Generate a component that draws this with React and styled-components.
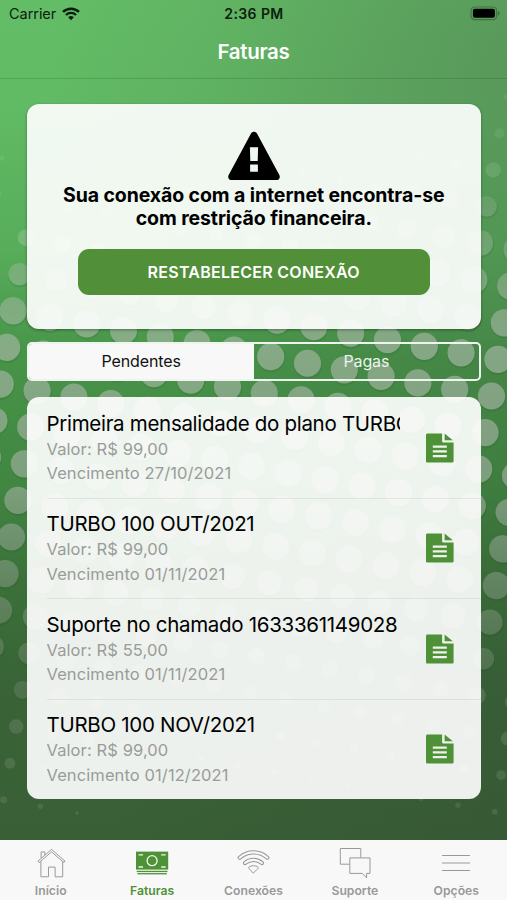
import React, { useState } from "react";
import styled, { createGlobalStyle } from "styled-components";

const invoices = [
  {
    id: 1,
    title: "Primeira mensalidade do plano TURBO",
    value: "99,00",
    due: "27/10/2021",
  },
  { id: 2, title: "TURBO 100 OUT/2021", value: "99,00", due: "01/11/2021" },
  {
    id: 3,
    title: "Suporte no chamado 1633361149028",
    value: "55,00",
    due: "01/11/2021",
  },
  { id: 4, title: "TURBO 100 NOV/2021", value: "99,00", due: "01/12/2021" },
];

// halftone pattern: a slightly rotated grid, dots shrink towards both ends
const dots = [];
for (let i = -8; i < 20; i++) {
  for (let j = -12; j < 16; j++) {
    const x = 270.7 + (i - 6) * 36.8 - j * 6.4;
    const y = 356.7 + (i - 6) * 6.55 + j * 36.6;
    const dip = 3.5 * Math.sin((Math.PI * Math.min(Math.max(x, 0), 507)) / 507);
    const r = Math.min(
      13.6,
      5 + (y + 0.12 * x - 190) * 0.075 - dip,
      3.5 + (803 - y) * 0.052 - dip * 0.7
    );
    if (x > -15 && x < 522 && y < 838 && r > 1.6) {
      dots.push({ x, y, r });
    }
  }
}

const Halftone = () => (
  <Pattern viewBox="0 0 507 900">
    <defs>
      <linearGradient
        id="dot"
        gradientUnits="userSpaceOnUse"
        x1="0"
        y1="120"
        x2="0"
        y2="820"
      >
        <stop offset="0" stopColor="#a5cba5" stopOpacity="0.12" />
        <stop offset="0.18" stopColor="#acc8ac" stopOpacity="0.38" />
        <stop offset="0.32" stopColor="#b0bfae" stopOpacity="0.62" />
        <stop offset="0.52" stopColor="#a3b3a1" stopOpacity="0.64" />
        <stop offset="0.66" stopColor="#8ca08b" stopOpacity="0.52" />
        <stop offset="0.8" stopColor="#7f957c" stopOpacity="0.36" />
        <stop offset="1" stopColor="#7f957c" stopOpacity="0.25" />
      </linearGradient>
    </defs>
    {dots.map(({ x, y, r }) => (
      <g key={`${x}-${y}`}>
        {r > 9 && (
          <circle
            cx={x + 0.4}
            cy={y + 1.4}
            r={r + 0.6}
            fill="#123c12"
            fillOpacity="0.1"
          />
        )}
        <circle cx={x} cy={y} r={r} fill="url(#dot)" />
      </g>
    ))}
  </Pattern>
);

const WifiIcon = () => (
  <svg width="18" height="14" viewBox="0 0 18 14" fill="none" stroke="#0b1f0c">
    <path d="M1 4.9a11.6 11.6 0 0 1 16 0" strokeWidth="2.5" />
    <path d="M3.9 8a7.4 7.4 0 0 1 10.2 0" strokeWidth="2.3" />
    <path d="M6.2 10.3a4 4 0 0 1 5.6 0L9 13.2z" fill="#0b1f0c" stroke="none" />
  </svg>
);

const BatteryIcon = () => (
  <svg width="31" height="15" viewBox="0 0 31 15">
    <rect
      x="1"
      y="1"
      width="25.6"
      height="12.6"
      rx="3.6"
      fill="none"
      stroke="#1d5021"
      strokeOpacity="0.5"
      strokeWidth="1.2"
    />
    <rect x="2.9" y="2.8" width="22" height="9" rx="2" fill="#000" />
    <path d="M28 5.2c2.1.6 2.1 3.7 0 4.3z" fill="#1d5021" fillOpacity="0.6" />
  </svg>
);

const WarningIcon = () => (
  <svg width="52" height="50" viewBox="0 0 52 50">
    <path
      fillRule="evenodd"
      d="M23 2.6c1.3-2.4 4.7-2.4 6 0l22.2 41.2c1.5 2.7 0 5.2-3 5.2H3.8c-3 0-4.5-2.5-3-5.2zM21.9 16.2l.4 13.8h7.4l.4-13.8zM22.1 33.6v7.2h7.8v-7.2z"
    />
  </svg>
);

const FileIcon = () => (
  <svg width="28" height="30" viewBox="0 0 28 30" fill="#4f9137">
    <path
      fillRule="evenodd"
      d="M1.5.4h14.6V8c0 .9.7 1.6 1.6 1.6h9.9V28c0 1-.6 1.6-1.5 1.6H1.5C.6 29.6 0 29 0 28V2C0 1 .6.4 1.5.4zM6.8 12.5v2.2h14v-2.2zM6.8 17.3v2.2h14v-2.2zM6.8 22.1v2.2h14v-2.2z"
    />
    <path d="M18.6.4v6.8H26.8z" />
  </svg>
);

const HomeIcon = () => (
  <svg width="34" height="34" viewBox="0 0 34 34" fill="none" stroke="currentColor">
    <path d="M6.9 14.4v15.4h7.6V20.1h6.6v9.7h7.6V14.4" />
    <path d="M4 14.1 17.5 2.4 31 14.1 29.9 15.6 17.5 4.9 5.1 15.6z" />
    <path d="M7.1 11.2V4.9h3.7v3" />
  </svg>
);

const MoneyIcon = () => (
  <svg width="34" height="34" viewBox="0 0 34 34" fill="currentColor">
    <rect x="1" y="4.6" width="32.2" height="18" />
    <rect x="1.7" y="23.8" width="30.8" height="1.3" />
    <rect x="2.4" y="26.1" width="29.4" height="1.3" />
    <g stroke="#f0f7ec" fill="none" strokeWidth="1.3">
      <circle cx="17.1" cy="13.7" r="5" />
      <path d="M3.6 7.8h4.4M26.2 7.8h4.4M3.6 20h4.4M26.2 20h4.4" />
    </g>
  </svg>
);

const ConnectionIcon = () => (
  <svg width="34" height="34" viewBox="0 0 34 34" fill="none" strokeLinecap="round">
    <g stroke="currentColor" strokeWidth="4.2">
      <path d="M3.7 10.7a20.5 20.5 0 0 1 27.6 0" />
      <path d="M9.1 16a12.8 12.8 0 0 1 16.8 0" />
    </g>
    <g stroke="#f8f8f8" strokeWidth="2.1">
      <path d="M3.7 10.7a20.5 20.5 0 0 1 27.6 0" />
      <path d="M9.1 16a12.8 12.8 0 0 1 16.8 0" />
    </g>
    <path
      d="M13.2 21.8c-.9-.9-.6-1.8.3-2.2 2.6-1.2 5.4-1.2 8 0 .9.4 1.2 1.3.3 2.2L17.5 25.9z"
      stroke="currentColor"
    />
  </svg>
);

const SupportIcon = () => (
  <svg width="34" height="34" viewBox="0 0 34 34" fill="none" stroke="currentColor">
    <path d="M11.3 17.2H2.3V1.5h20.5v9.1" />
    <path d="M11.8 10.9h20.2v15.5h-3.4v4.4l-4.5-4.4H11.8z" />
  </svg>
);

const MenuIcon = () => (
  <svg width="34" height="34" viewBox="0 0 34 34" stroke="currentColor" strokeWidth="1.2">
    <path d="M3 8.5h28M3 16h28M3 23.5h28" />
  </svg>
);

const menu = [
  { label: "Início", Icon: HomeIcon },
  { label: "Faturas", Icon: MoneyIcon, active: true },
  { label: "Conexões", Icon: ConnectionIcon },
  { label: "Suporte", Icon: SupportIcon },
  { label: "Opções", Icon: MenuIcon },
];

const App = () => {
  const [tab, setTab] = useState("pending");

  return (
    <Screen>
      <GlobalStyle />
      <Halftone />
      <StatusBar>
        <Carrier>
          Carrier
          <WifiIcon />
        </Carrier>
        <Clock>2:36 PM</Clock>
        <Battery>
          <BatteryIcon />
        </Battery>
      </StatusBar>
      <Header>Faturas</Header>
      <Content>
        <Notice>
          <WarningIcon />
          <NoticeText>
            Sua conexão com a internet encontra-se
            <br />
            com restrição financeira.
          </NoticeText>
          <RestoreButton>RESTABELECER CONEXÃO</RestoreButton>
        </Notice>
        <Tabs>
          <Tab $active={tab === "pending"} onClick={() => setTab("pending")}>
            Pendentes
          </Tab>
          <Tab $active={tab === "paid"} onClick={() => setTab("paid")}>
            Pagas
          </Tab>
        </Tabs>
        <List>
          {invoices.map(({ id, title, value, due }) => (
            <Invoice key={id}>
              <Details>
                <Title>{title}</Title>
                <Info>Valor: R$ {value}</Info>
                <Info>Vencimento {due}</Info>
              </Details>
              <FileIcon />
            </Invoice>
          ))}
        </List>
      </Content>
      <Menu>
        {menu.map(({ label, Icon, active }) => (
          <MenuItem key={label} $active={active}>
            <Icon />
            <span>{label}</span>
          </MenuItem>
        ))}
      </Menu>
    </Screen>
  );
};

const GlobalStyle = createGlobalStyle`
  * {
    box-sizing: border-box;
    margin: 0;
    padding: 0;
  }
  body {
    font-family: Inter, "Liberation Sans", sans-serif;
    overflow: hidden;
  }
  button {
    font-family: inherit;
    border: none;
    background: none;
    cursor: pointer;
  }
`;

const Screen = styled.div`
  position: relative;
  display: flex;
  flex-direction: column;
  width: 507px;
  height: 900px;
  overflow: hidden;
  background: radial-gradient(
      ellipse 460px 420px at 100% 60px,
      rgba(75, 80, 72, 0.24),
      rgba(75, 80, 72, 0)
    ),
    linear-gradient(
      98deg,
      rgba(0, 0, 0, 0) 35%,
      rgba(40, 45, 45, 0.12) 100%
    ),
    linear-gradient(
      to bottom,
      #63bd66 0,
      #61ba64 110px,
      #57ad5a 250px,
      #479348 360px,
      #418742 480px,
      #3b7139 580px,
      #396437 680px,
      #395f36 840px
    );
`;

const Pattern = styled.svg`
  position: absolute;
  inset: 0;
  width: 507px;
  height: 900px;
  pointer-events: none;
`;

const StatusBar = styled.div`
  position: relative;
  display: grid;
  grid-template-columns: 1fr auto 1fr;
  align-items: center;
  height: 27px;
  padding: 0 6px 0 9px;
  color: #0b1f0c;
`;

const Carrier = styled.div`
  display: flex;
  align-items: center;
  gap: 6px;
  font-size: 14.5px;
  letter-spacing: -0.05px;
`;

const Clock = styled.div`
  margin-left: -2px;
  font-weight: 600;
  font-size: 14px;
  letter-spacing: 0.4px;
`;

const Battery = styled.div`
  display: flex;
  justify-content: flex-end;
`;

const Header = styled.h1`
  position: relative;
  height: 52px;
  line-height: 50px;
  text-align: center;
  font-size: 20.5px;
  font-weight: 600;
  letter-spacing: -0.3px;
  color: #fff;
  border-bottom: 1px solid rgba(20, 80, 25, 0.2);
`;

const Content = styled.main`
  position: relative;
  flex: 1;
  display: flex;
  flex-direction: column;
  padding: 24.5px 26px 0 26.5px;
`;

const Notice = styled.section`
  display: flex;
  flex-direction: column;
  align-items: center;
  height: 225.5px;
  padding-top: 27px;
  border-radius: 12px;
  background: rgba(255, 255, 255, 0.91);
  box-shadow: 0 1px 3px rgba(0, 0, 0, 0.35);
  svg {
    flex-shrink: 0;
  }
`;

const NoticeText = styled.p`
  margin-top: 3px;
  text-align: center;
  font-size: 19.5px;
  font-weight: 700;
  line-height: 23.5px;
  letter-spacing: -0.1px;
  white-space: nowrap;
  color: #000;
`;

const RestoreButton = styled.button`
  width: 352px;
  height: 46px;
  margin-top: 18px;
  border-radius: 11px;
  background: #528f39;
  color: #fff;
  font-size: 16px;
  font-weight: 600;
  letter-spacing: 0.27px;
`;

const Tabs = styled.div`
  display: flex;
  height: 39px;
  margin-top: 12.5px;
  border: 2px solid #eef5ee;
  border-radius: 5px;
  overflow: hidden;
`;

const Tab = styled.button`
  flex: 1;
  padding-bottom: 1px;
  font-size: 16px;
  letter-spacing: -0.1px;
  color: ${({ $active }) => ($active ? "#111" : "#eef3ed")};
  background: ${({ $active }) => ($active ? "#f8f8f8" : "transparent")};
`;

const List = styled.section`
  height: 402.5px;
  margin-top: 16px;
  padding-top: 0.5px;
  border-radius: 12px;
  background: rgba(255, 255, 255, 0.91);
  overflow: hidden;
`;

const Invoice = styled.article`
  display: flex;
  align-items: center;
  height: 100.5px;
  margin-left: 20px;
  padding: 0.6px 27px 0 0;
  box-shadow: 0 1px 0 rgba(60, 80, 60, 0.09);
`;

const Details = styled.div`
  width: 353px;
  margin-right: 26.5px;
  flex-shrink: 0;
`;

const Title = styled.h2`
  height: 27px;
  line-height: 27px;
  overflow: hidden;
  white-space: nowrap;
  font-size: 20.5px;
  font-weight: 400;
  letter-spacing: -0.3px;
  color: #000;
`;

const Info = styled.p`
  line-height: 24.5px;
  font-size: 16.5px;
  letter-spacing: 0.1px;
  color: #999c99;
`;

const Menu = styled.nav`
  position: relative;
  display: grid;
  grid-template-columns: repeat(5, 1fr);
  height: 60px;
  background: #f8f8f8;
`;

const MenuItem = styled.a`
  display: flex;
  flex-direction: column;
  align-items: center;
  padding-top: 7px;
  color: ${({ $active }) => ($active ? "#4f9137" : "#999")};
  font-size: 12.2px;
  font-weight: 600;
  line-height: 15px;
  span {
    margin-top: 1.5px;
  }
`;

export default App;
